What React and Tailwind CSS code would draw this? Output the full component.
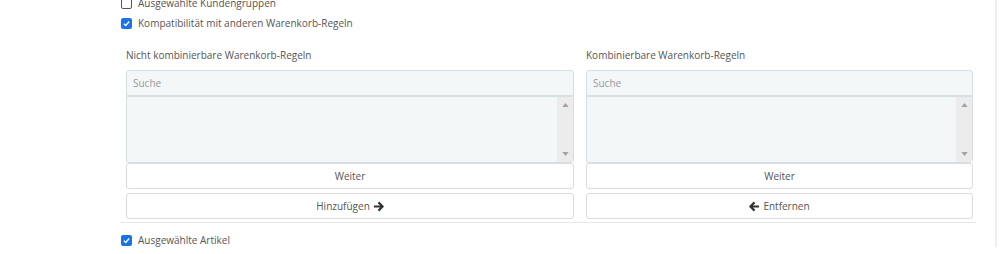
import React from 'react'

const font = { fontFamily: '"Open Sans", "Liberation Sans", sans-serif' }

function Check({ checked, label }) {
  return (
    <label className="flex h-5 items-center gap-[6px] text-[10px] text-[#555]">
      {checked ? (
        <span className="flex h-[11px] w-[11px] items-center justify-center rounded-[2px] bg-[#1a73e8]">
          <svg viewBox="0 0 12 12" className="h-[9px] w-[9px]">
            <path d="M2.5 6.2 L5 8.6 L9.6 3.4" fill="none" stroke="white" strokeWidth="1.8" />
          </svg>
        </span>
      ) : (
        <span className="h-[11px] w-[11px] rounded-[2px] border border-[#555] bg-white" />
      )}
      <span>{label}</span>
    </label>
  )
}

function ListBox({ title, actionLabel, dir }) {
  return (
    <div className="flex flex-col">
      <div className="h-[36px] pt-[14px] text-[10px] leading-[14px] text-[#555]">{title}</div>
      <div className="flex h-[26px] items-center rounded-t-[3px] border border-[#d6e0e4] bg-[#f4f7f8] px-[6px] text-[10px] text-[#999]">
        Suche
      </div>
      <div className="flex h-[67px] rounded-b-[3px] border border-[#d6e0e4] bg-[#f4f7f8]">
        <div className="flex-1" />
        <div className="flex w-[16px] flex-col items-center justify-between bg-[#ececec] py-[6px]">
          <svg viewBox="0 0 8 5" className="h-[4px] w-[7px]"><path d="M0 5 L4 0 L8 5Z" fill="#a3a3a3" /></svg>
          <svg viewBox="0 0 8 5" className="h-[4px] w-[7px]"><path d="M0 0 L8 0 L4 5Z" fill="#a3a3a3" /></svg>
        </div>
      </div>
      <button className="flex h-[26px] items-center justify-center rounded-[3px] border border-[#dcdcdc] bg-white text-[10px] text-[#555]">
        Weiter
      </button>
      <button className="mt-[4px] flex h-[26px] items-center justify-center gap-[3px] rounded-[3px] border border-[#dcdcdc] bg-white text-[10px] text-[#555]">
        {dir === 'left' && (
          <svg viewBox="0 0 12 12" className="h-[11px] w-[11px]">
            <path d="M6 1.5 L1.5 6 L6 10.5 M2 6 H11" fill="none" stroke="#333" strokeWidth="2.4" strokeLinejoin="round" />
          </svg>
        )}
        <span>{actionLabel}</span>
        {dir === 'right' && (
          <svg viewBox="0 0 12 12" className="h-[11px] w-[11px]">
            <path d="M6 1.5 L10.5 6 L6 10.5 M10 6 H1" fill="none" stroke="#333" strokeWidth="2.4" strokeLinejoin="round" />
          </svg>
        )}
      </button>
    </div>
  )
}

export default function App() {
  return (
    <div className="h-[254px] w-[1000px] overflow-hidden bg-white" style={font}>
      <div className="h-full w-[997px] border-r-2 border-[#efefef]">
        <div className="-mt-[7px] pl-[120px] pr-[19px]">
          <div className="pl-[1px]">
            <Check checked={false} label="Ausgewählte Kundengruppen" />
            <Check checked label="Kompatibilität mit anderen Warenkorb-Regeln" />
          </div>
          <div className="grid grid-cols-[448px_387px] gap-x-3 px-[6px] pt-[1px] pb-[3px]">
            <ListBox title="Nicht kombinierbare Warenkorb-Regeln" actionLabel="Hinzufügen" dir="right" />
            <ListBox title="Kombinierbare Warenkorb-Regeln" actionLabel="Entfernen" dir="left" />
          </div>
          <div className="border-t border-[#e6e6e6] pt-[7px] pl-[1px]">
            <Check checked label="Ausgewählte Artikel" />
          </div>
        </div>
      </div>
    </div>
  )
}
